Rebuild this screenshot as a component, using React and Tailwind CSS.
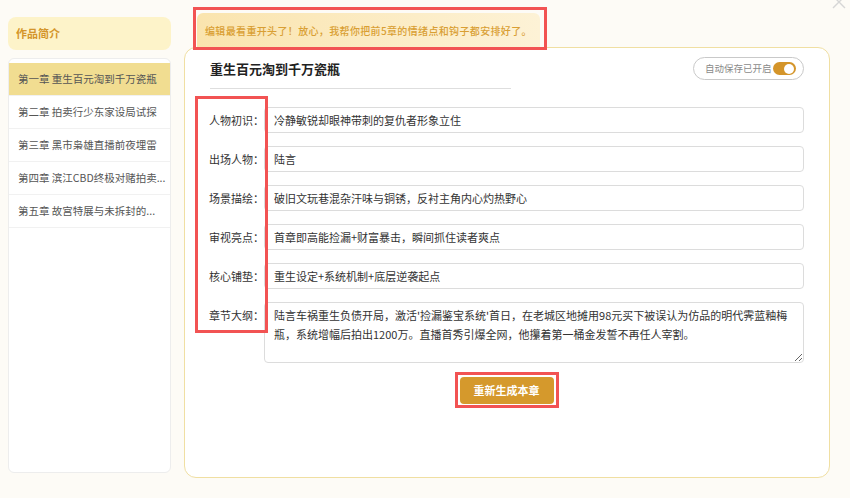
import { useState } from "react";

const chapters = [
  "第一章 重生百元淘到千万瓷瓶",
  "第二章 拍卖行少东家设局试探",
  "第三章 黑市枭雄直播前夜埋雷",
  "第四章 滨江CBD终极对赌拍卖...",
  "第五章 故宫特展与未拆封的...",
];

const fields = [
  { label: "人物初识", value: "冷静敏锐却眼神带刺的复仇者形象立住" },
  { label: "出场人物", value: "陆言" },
  { label: "场景描绘", value: "破旧文玩巷混杂汗味与铜锈，反衬主角内心灼热野心" },
  { label: "审视亮点", value: "首章即高能捡漏+财富暴击，瞬间抓住读者爽点" },
  { label: "核心铺垫", value: "重生设定+系统机制+底层逆袭起点" },
];

const outline =
  "陆言车祸重生负债开局，激活'捡漏鉴宝系统'首日，在老城区地摊用98元买下被误认为仿品的明代霁蓝釉梅瓶，系统增幅后拍出1200万。直播首秀引爆全网，他攥着第一桶金发誓不再任人宰割。";

const Sidebar = ({ active, onSelect }) => (
  <aside className="w-[163px] shrink-0 pt-[17px] flex flex-col">
    <div className="h-[33px] rounded-lg bg-[#fdf3c9] flex items-center pl-[8px] text-[11px] font-semibold text-[#d4952a]">
      作品简介
    </div>
    <div className="mt-[8px] h-[415px] rounded-md border border-[#ededed] bg-white pt-[4px]">
      {chapters.map((title, i) => (
        <button
          key={title}
          onClick={() => onSelect(i)}
          className={`w-full h-[33px] flex items-center px-[9px] border-b border-[#f1f1f1] text-left text-[10.5px] whitespace-nowrap overflow-hidden text-[#555] ${
            active === i ? "bg-[#f1dd91]" : "bg-white"
          }`}
        >
          {title}
        </button>
      ))}
    </div>
  </aside>
);

const AutoSave = ({ on, onToggle }) => (
  <div className="h-[23px] w-[111px] rounded-full border border-[#c9c9c9] flex items-center justify-between pl-[11px] pr-[7px]">
    <span className="text-[9.5px] text-[#8a8a8a]">自动保存已开启</span>
    <button
      onClick={onToggle}
      className={`w-[23px] h-[13px] rounded-full flex items-center px-[2px] ${
        on ? "bg-[#d4952a] justify-end" : "bg-[#ccc] justify-start"
      }`}
    >
      <span className="block w-[10px] h-[10px] rounded-full bg-white" />
    </button>
  </div>
);

const Label = ({ children }) => (
  <label className="w-[55px] shrink-0 whitespace-nowrap text-[11px] leading-[26px] text-[#333]">
    {children}：
  </label>
);

export default function App() {
  const [active, setActive] = useState(0);
  const [autoSave, setAutoSave] = useState(true);

  return (
    <div className="relative w-[850px] h-[498px] overflow-hidden bg-[#fdfbf6] font-['Noto_Sans_CJK_SC','Noto_Sans',sans-serif] flex pl-[8px] gap-[13px]">
      <Sidebar active={active} onSelect={setActive} />

      <main className="w-[646px] pt-[13px] flex flex-col">
        {/* tip banner */}
        <div className="ml-[13px] w-[343px] h-[34px] shrink-0 rounded-t-md bg-gradient-to-r from-[#fae4ae] to-[#fdf2d6] flex items-center pl-[8px] text-[10px] tracking-[0.35px] font-medium text-[#d99f33]">
          编辑最看重开头了！放心，我帮你把前5章的情绪点和钩子都安排好了。
        </div>

        <section className="h-[431px] shrink-0 rounded-xl border border-[#f0dfa2] bg-white pl-[24px] pr-[25px] pt-[9px] flex flex-col">
          <div className="h-[23px] pl-[1px] flex items-center justify-between">
            <h2 className="text-[13px] font-bold text-[#222]">重生百元淘到千万瓷瓶</h2>
            <AutoSave on={autoSave} onToggle={() => setAutoSave(!autoSave)} />
          </div>
          <div className="mt-[8px] ml-[1px] w-[301px] border-b border-[#dedede]" />

          <div className="mt-[18px] flex flex-col gap-[13px]">
            {fields.map((f) => (
              <div key={f.label} className="flex items-start">
                <Label>{f.label}</Label>
                <input
                  defaultValue={f.value}
                  className="flex-1 min-w-0 h-[26px] rounded border border-[#dcdcdc] px-[9px] text-[11px] text-[#333] outline-none"
                />
              </div>
            ))}
            <div className="flex items-start">
              <Label>章节大纲</Label>
              <textarea
                defaultValue={outline}
                className="flex-1 min-w-0 h-[61px] rounded border border-[#dcdcdc] px-[9px] pt-[3px] text-[11px] leading-[19px] text-[#333] outline-none"
              />
            </div>
          </div>

          <div className="mt-[14px] flex justify-center">
            <button className="w-[94px] h-[27px] rounded bg-[#d5992c] text-white text-[11px] font-bold">
              重新生成本章
            </button>
          </div>
        </section>
      </main>

      {/* close */}
      <svg className="absolute left-[832px] top-[-5px]" width="14" height="14" viewBox="0 0 14 14">
        <path d="M1 1L13 13M13 1L1 13" stroke="#d6d6d6" strokeWidth="1.4" />
      </svg>

      {/* review markers */}
      <div className="absolute left-[193px] top-[7px] w-[354px] h-[43px] border-[3px] border-[#f25353]" />
      <div className="absolute left-[195px] top-[96px] w-[73px] h-[237px] border-[3px] border-[#f25353]" />
      <div className="absolute left-[455px] top-[372px] w-[104px] h-[36px] border-[3px] border-[#f25353]" />
    </div>
  );
}
